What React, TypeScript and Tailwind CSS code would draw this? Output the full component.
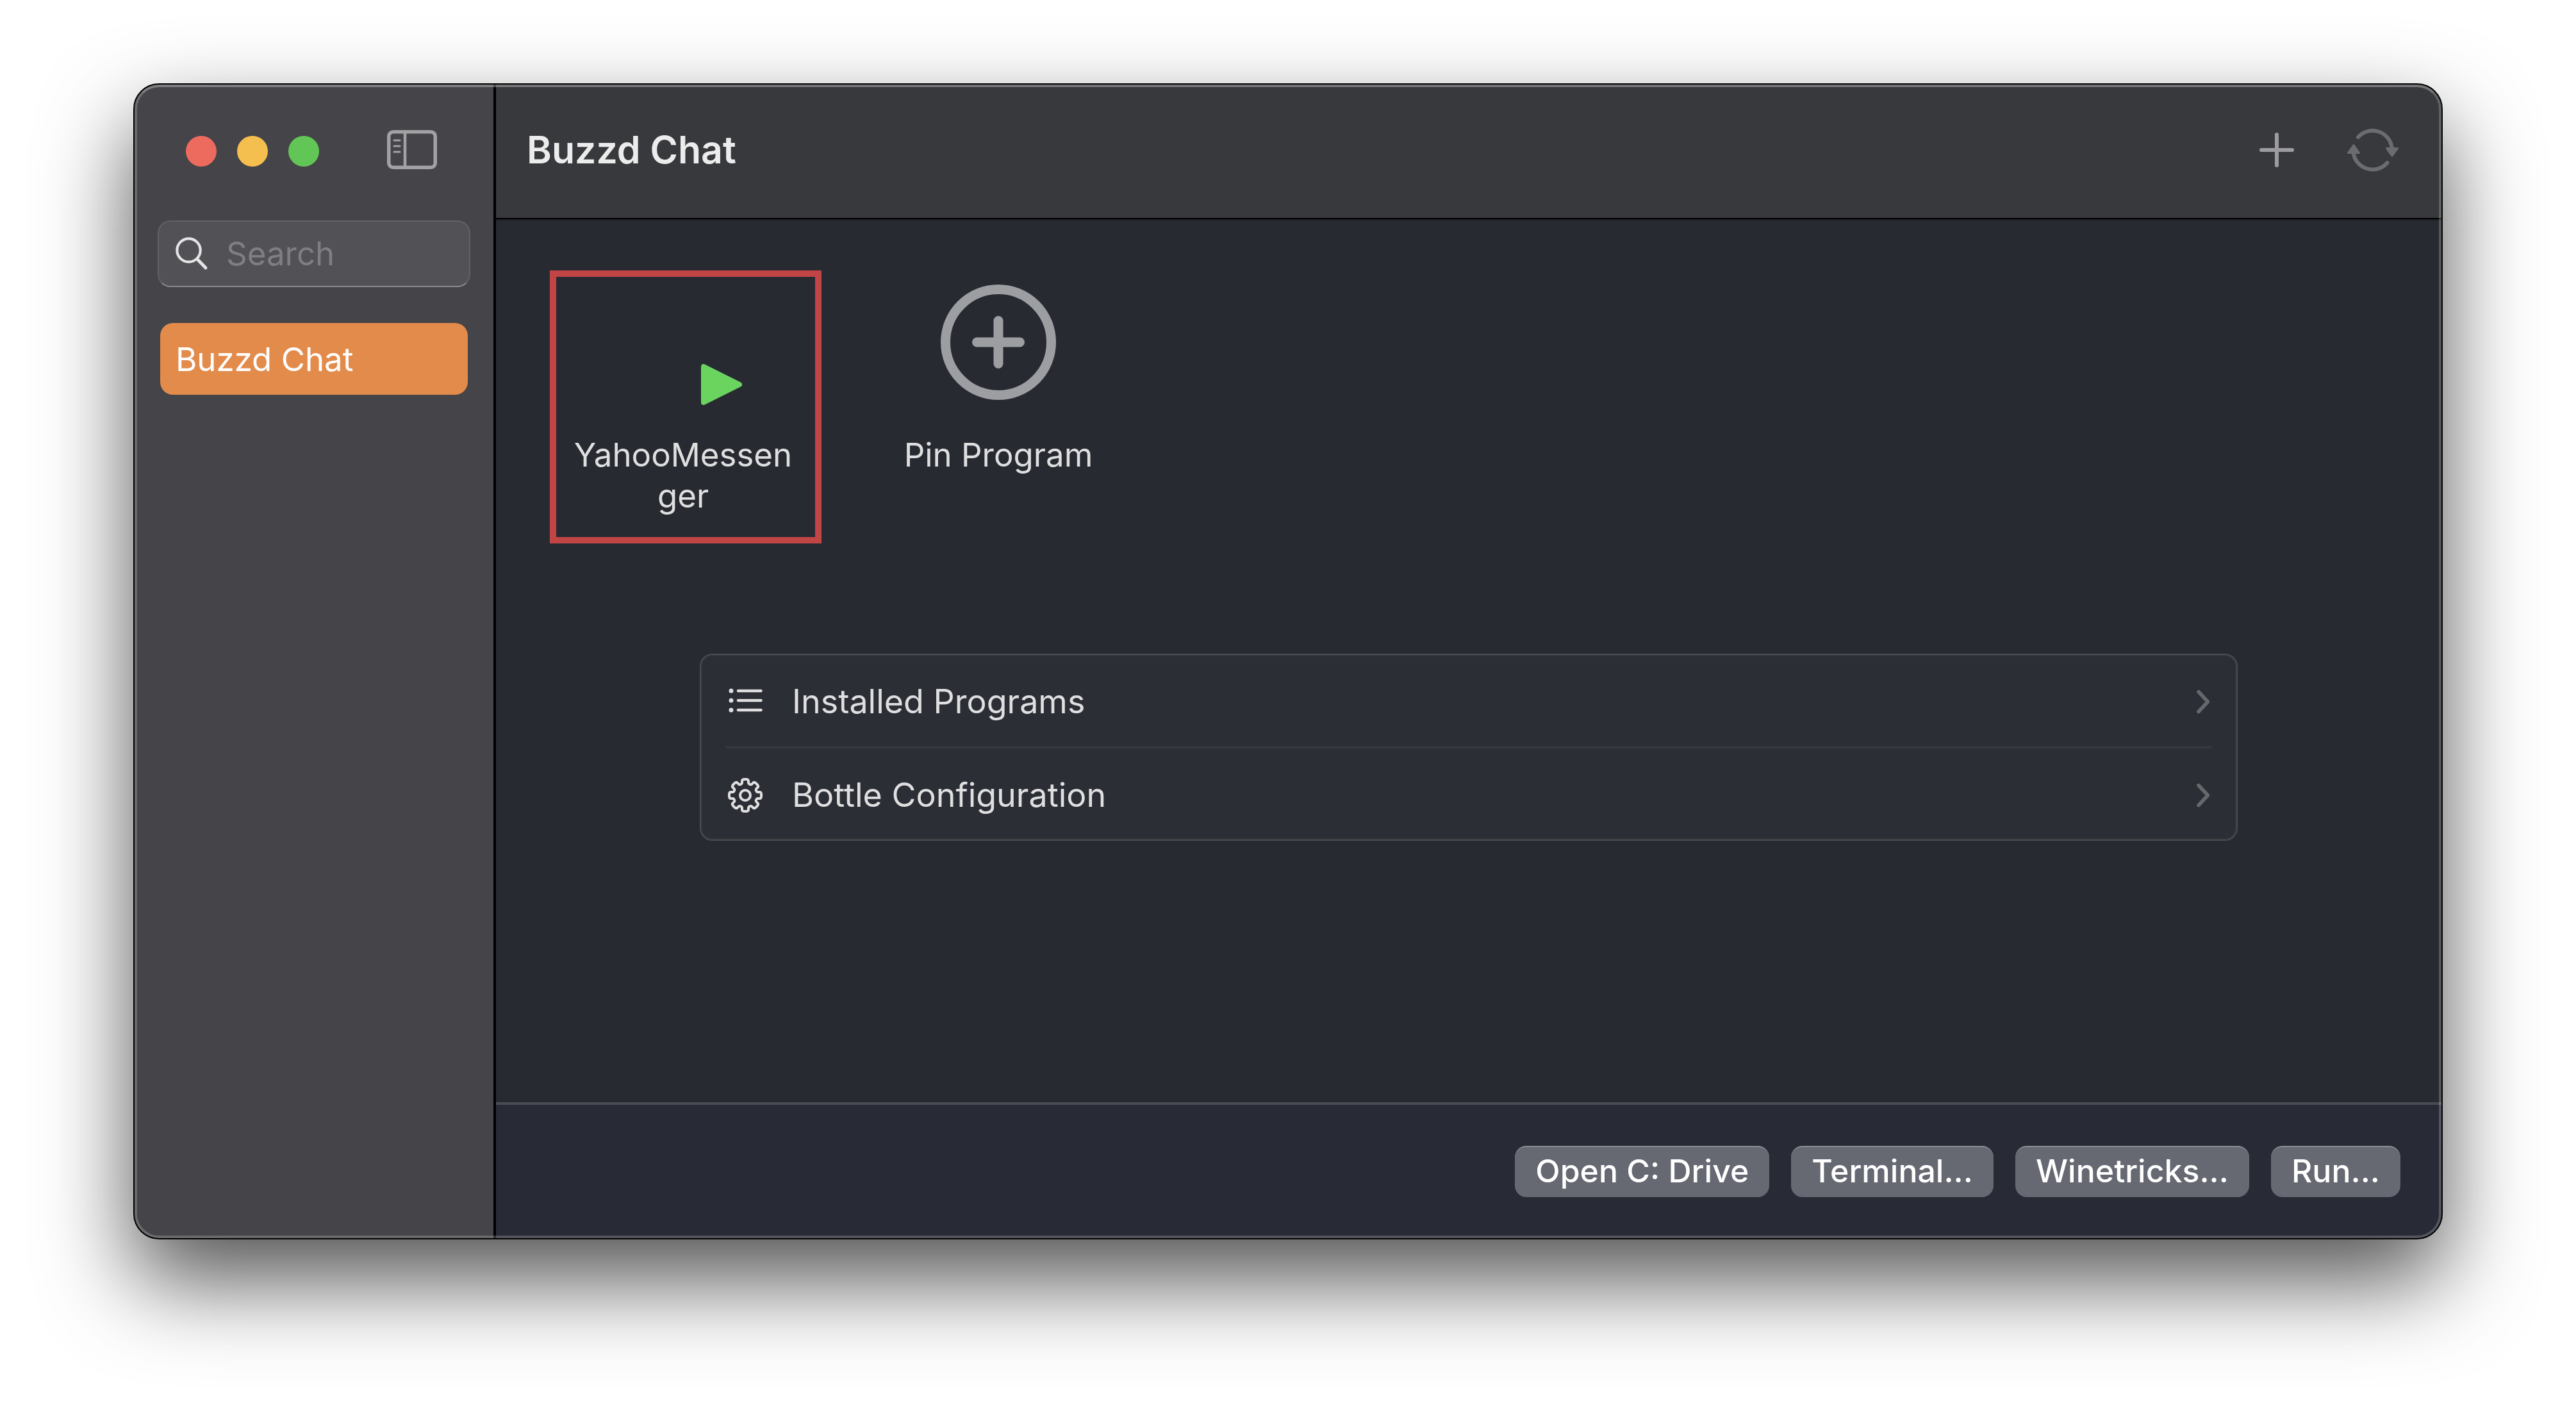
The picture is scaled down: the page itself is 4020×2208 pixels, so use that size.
import type { ReactNode } from "react";

/** Outline of an eight-toothed gear, rounded by running through edge midpoints. */
function gearPath(cx: number, cy: number) {
  const pts: [number, number][] = [];
  const add = (r: number, deg: number) => {
    const a = (deg * Math.PI) / 180;
    pts.push([cx + r * Math.sin(a), cy - r * Math.cos(a)]);
  };
  for (let k = 0; k < 8; k++) {
    const a = k * 45;
    add(18.6, a - 16.5);
    add(21, a - 13.5);
    add(25.6, a - 11.5);
    add(25.6, a + 11.5);
    add(21, a + 13.5);
    add(18.6, a + 16.5);
  }
  const mid = (i: number) => {
    const p = pts[i % pts.length];
    const q = pts[(i + 1) % pts.length];
    return `${((p[0] + q[0]) / 2).toFixed(2)} ${((p[1] + q[1]) / 2).toFixed(2)}`;
  };
  let d = `M${mid(pts.length - 1)}`;
  pts.forEach((p, i) => {
    d += `Q${p[0].toFixed(2)} ${p[1].toFixed(2)} ${mid(i)}`;
  });
  return d + "Z";
}

function SidebarIcon() {
  return (
    <svg className="h-[66px] w-[78px]" viewBox="0 0 78 66" fill="none" stroke="currentColor" aria-hidden="true">
      <rect x="2.75" y="2.75" width="72.5" height="55.5" rx="7" strokeWidth="5.5" />
      <path d="M28 3v55" strokeWidth="4.5" />
      <path d="M11 16h9M11 25h9M11 34h9" strokeWidth="3" strokeLinecap="round" />
    </svg>
  );
}

function SearchIcon() {
  return (
    <svg className="h-[52px] w-[52px] shrink-0 text-[#e4e4e5]" viewBox="0 0 52 52" fill="none" stroke="currentColor" strokeLinecap="round" aria-hidden="true">
      <circle cx="21.5" cy="20.5" r="18.2" strokeWidth="4.2" />
      <path d="M35 34.500l13 13.500" strokeWidth="5" />
    </svg>
  );
}

function PlusIcon() {
  return (
    <svg className="h-[54px] w-[54px]" viewBox="0 0 54 54" fill="none" stroke="currentColor" strokeWidth="6" strokeLinecap="round" aria-hidden="true">
      <path d="M27 3v48M3 27h48" />
    </svg>
  );
}

function RefreshIcon() {
  return (
    <svg className="h-[68px] w-[82px]" viewBox="0 0 82 68" fill="none" stroke="currentColor" strokeLinecap="round" strokeLinejoin="round" aria-hidden="true">
      <path d="M18 14A30.300 30.300 0 0 1 70.800 32" strokeWidth="6" />
      <path d="M10.500 38A30.300 30.300 0 0 0 63.500 54" strokeWidth="6" />
      <path d="M62.500 31.500h17l-8.500 11.500zM2.500 38.500h17L11 26.500z" fill="currentColor" strokeWidth="3" />
    </svg>
  );
}

function ListIcon() {
  return (
    <svg className="h-[54px] w-[54px]" viewBox="0 0 54 54" fill="none" stroke="currentColor" strokeLinecap="round" aria-hidden="true">
      <path d="M5 10h0M5 25h0M5 40h0" strokeWidth="7" />
      <path d="M16 10h35.500M16 25h35.500M16 40h35.500" strokeWidth="4.5" />
    </svg>
  );
}

function GearIcon() {
  return (
    <svg className="h-[54px] w-[54px]" viewBox="0 0 54 54" fill="none" stroke="currentColor" strokeWidth="4" strokeLinejoin="round" aria-hidden="true">
      <path d={gearPath(27, 27)} />
      <circle cx="27" cy="27" r="8" />
    </svg>
  );
}

function Chevron() {
  return (
    <svg className="h-[38px] w-[22px] text-[#67686c]" viewBox="0 0 22 38" fill="none" stroke="currentColor" strokeWidth="5.5" strokeLinecap="round" strokeLinejoin="round" aria-hidden="true">
      <path d="M5 3.500l14.500 15.500l-14.500 15.500" />
    </svg>
  );
}

function Sidebar() {
  return (
    <aside className="flex w-[564px] shrink-0 flex-col border-r-4 border-black bg-[#454448]">
      <div className="flex h-[212px] items-center pb-1 pl-20">
        <div className="flex gap-8">
          <button aria-label="Close" className="size-12 rounded-full bg-[#ed6a5f]" />
          <button aria-label="Minimize" className="size-12 rounded-full bg-[#f5bf4f]" />
          <button aria-label="Zoom" className="size-12 rounded-full bg-[#62c656]" />
        </div>
        <button aria-label="Toggle sidebar" className="ml-[106px] text-[#a2a2a4]">
          <SidebarIcon />
        </button>
      </div>
      <label className="mx-9 flex h-[104px] items-center gap-7 rounded-[20px] border-2 border-[#626165] border-b-[#8a8a8d] bg-[#525155] pl-[25px]">
        <SearchIcon />
        <input
          type="text"
          aria-label="Search"
          placeholder="Search"
          className="w-full min-w-0 bg-transparent text-[51px] leading-[64px] text-white outline-none placeholder:text-[#7f7f82]"
        />
      </label>
      <nav className="mx-10 mt-14">
        <a href="#buzzd-chat" aria-current="page" className="flex h-28 items-center rounded-[20px] bg-[#e38b4b] pt-0.5 pl-6 text-[51px] leading-[64px] text-white">
          Buzzd Chat
        </a>
      </nav>
    </aside>
  );
}

function Tile({ label, pinned, children }: { label: string; pinned?: boolean; children?: ReactNode }) {
  return (
    <button
      className={
        pinned
          ? "flex w-[424px] flex-col items-center border-[10px] border-[#c24545] pt-3 pr-2 pb-8"
          : "flex w-[424px] flex-col items-center border-[10px] border-transparent pt-3 pb-8"
      }
    >
      <span className="relative size-[180px]">{children}</span>
      <span className="mt-[54px] w-[360px] text-center text-[51px] leading-[64px] break-all">{label}</span>
    </button>
  );
}

function CardRow({ icon, label }: { icon: ReactNode; label: string }) {
  return (
    <a href="#" className="flex h-[142px] items-center px-1 pt-1">
      {icon}
      <span className="ml-[46px] flex-1 text-[52px] leading-[64px]">{label}</span>
      <Chevron />
    </a>
  );
}

const actions = ["Open C: Drive", "Terminal...", "Winetricks...", "Run..."];

export default function App() {
  return (
    <div className="flex min-h-screen bg-white px-[208px] pt-[130px] pb-[274px] font-[Inter,'Liberation_Sans',sans-serif] text-[#dfdfe0]">
      <div className="relative flex flex-1 overflow-hidden rounded-[40px] border-2 border-black bg-[#282a32] shadow-[0_64px_140px_rgba(0,0,0,0.68)]">
        <Sidebar />
        <div className="flex min-w-0 flex-1 flex-col">
          <header className="flex h-[210px] items-center border-b-2 border-black bg-[#38393d] pr-[66px] pb-1 pl-12">
            <h1 className="flex-1 text-[59px] leading-[72px] font-semibold text-[#ececed]">Buzzd Chat</h1>
            <button aria-label="Add" className="text-[#9c9ca0]">
              <PlusIcon />
            </button>
            <button aria-label="Refresh" className="ml-[82px] text-[#6b6b70]">
              <RefreshIcon />
            </button>
          </header>

          <main className="flex-1 border-t-2 border-[#1e1f22]">
            <div className="flex items-start gap-16 pt-[78px] pl-[84px]">
              <Tile label="YahooMessenger" pinned>
                <svg className="absolute -right-1 -bottom-2 h-16 w-[66px]" viewBox="0 0 66 64" aria-hidden="true">
                  <path d="M4 4v56l56-28z" fill="#6ad45f" stroke="#6ad45f" strokeWidth="8" strokeLinejoin="round" />
                </svg>
              </Tile>
              <Tile label="Pin Program">
                <svg className="size-full text-[#9d9ea1]" viewBox="0 0 180 180" fill="none" stroke="currentColor" strokeWidth="15" strokeLinecap="round" aria-hidden="true">
                  <circle cx="90" cy="90" r="82.5" />
                  <path d="M90 56.500v67M56.500 90h67" />
                </svg>
              </Tile>
            </div>

            <div className="mx-auto mt-[172px] w-full max-w-[2400px] rounded-[20px] border-2 border-[#4b4c50] bg-[#2c2e36] px-[38px] shadow-[inset_0_0_0_2px_#34363b]">
              <CardRow icon={<ListIcon />} label="Installed Programs" />
              <div className="h-1 bg-[#343740]" />
              <CardRow icon={<GearIcon />} label="Bottle Configuration" />
            </div>
          </main>

          <footer className="flex h-[212px] items-center justify-end gap-[34px] border-t-4 border-[#4a4c55] bg-[#282a35] pr-16">
            {actions.map((label) => (
              <button
                key={label}
                className="h-20 rounded-[18px] border-t-2 border-[#8a8c95] bg-[#666872] px-8 pb-1 text-[50px] leading-[64px] font-medium text-white"
              >
                {label}
              </button>
            ))}
          </footer>
        </div>
        <div className="pointer-events-none absolute inset-0 rounded-[38px] border-4 border-white/20 border-t-white/30" />
      </div>
    </div>
  );
}
